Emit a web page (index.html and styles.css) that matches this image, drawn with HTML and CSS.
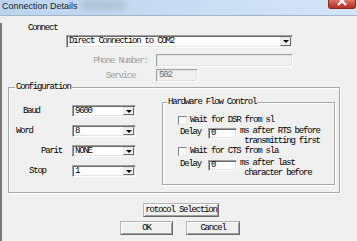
FILE: index.html
```html
<!DOCTYPE html>
<html>
<head>
<meta charset="utf-8">
<link rel="stylesheet" href="styles.css">
</head>
<body>
<div class="window">
  <div class="titlebar">
    <span class="title">Connection Details</span>
    <span class="blur"></span>
    <span class="close"><svg width="26" height="12" viewBox="0 0 26 12"><path d="M9 -3 L17 5 M17 -3 L9 5" stroke="#fff" stroke-width="2.2" fill="none"/></svg></span>
  </div>
  <div class="dialog">
    <div class="connect-label">Connect</div>
    <div class="combo combo-main"><span class="combo-text">Direct Connection to COM2</span><span class="drop"><i class="arrow"></i></span></div>
    <div class="field-row phone-row"><span class="field-label">Phone Number:</span><span class="field field-phone"></span></div>
    <div class="field-row service-row"><span class="field-label">Service</span><span class="field field-service">502</span></div>
    <div class="group config">
      <span class="legend">Configuration</span>
      <div class="config-body">
        <div class="settings">
          <span class="lbl lbl-baud">Baud</span>
          <div class="combo combo-small"><span class="combo-text">9600</span><span class="drop"><i class="arrow"></i></span></div>
          <span class="lbl lbl-word">Word</span>
          <div class="combo combo-small"><span class="combo-text">8</span><span class="drop"><i class="arrow"></i></span></div>
          <span class="lbl lbl-parit">Parit</span>
          <div class="combo combo-small"><span class="combo-text">NONE</span><span class="drop"><i class="arrow"></i></span></div>
          <span class="lbl lbl-stop">Stop</span>
          <div class="combo combo-small"><span class="combo-text">1</span><span class="drop"><i class="arrow"></i></span></div>
        </div>
        <div class="group hw">
          <span class="legend hw-legend">Hardware Flow Control</span>
          <div class="check-row first"><span class="checkbox"></span><span>Wait for DSR from sl</span></div>
          <div class="delay-row"><span class="delay-label">Delay</span><span class="delay-input">0</span><span class="delay-text">ms after RTS before
 transmitting first</span></div>
          <div class="check-row"><span class="checkbox"></span><span>Wait for CTS from sla</span></div>
          <div class="delay-row second"><span class="delay-label">Delay</span><span class="delay-input">0</span><span class="delay-text">ms after last
 character before</span></div>
        </div>
      </div>
    </div>
    <div class="btn btn-protocol">rotocol Selection</div>
    <div class="btn-row">
      <div class="btn btn-ok">OK</div>
      <div class="btn btn-cancel">Cancel</div>
    </div>
  </div>
</div>
</body>
</html>
```

FILE: styles.css
```css
* { box-sizing: border-box; }

body {
  margin: 0;
  width: 357px;
  height: 241px;
  overflow: hidden;
  background: #f0f0f0;
  font-family: "Liberation Mono", "DejaVu Sans Mono", monospace;
  font-size: 9px;
  letter-spacing: -1.2px;
  color: #000;
}

.titlebar {
  position: relative;
  height: 16px;
  border-bottom: 1px solid #a3b5c8;
  background: linear-gradient(to right, #bcd4ee, #d3e5f8);
  font-family: "Liberation Sans", Arial, sans-serif;
  letter-spacing: 0;
}

.title {
  display: block;
  padding-left: 2px;
  line-height: 13px;
  font-size: 9px;
  color: #1a1a1a;
}

.blur {
  position: absolute;
  left: 82px;
  top: 0;
  width: 44px;
  height: 10px;
  background: #8d9aa8;
  opacity: 0.35;
  filter: blur(3px);
}

.close {
  position: absolute;
  right: 1px;
  top: 0;
  width: 28px;
  height: 9px;
  border: 1px solid #8a2a20;
  border-top: none;
  border-radius: 0 0 3px 3px;
  background: linear-gradient(#d9796b, #c7453a 60%, #b53224);
  overflow: hidden;
}

.close svg { display: block; }

.dialog {
  height: 225px;
  border-left: 2px solid #7a7a7a;
}

.connect-label {
  margin: 7px 0 0 26px;
  line-height: 10px;
  height: 10px;
}

/* combo boxes */
.combo {
  display: flex;
  align-items: stretch;
  background: #fff;
  border: 1px solid;
  border-color: #a0a0a0 #fff #fff #a0a0a0;
  box-shadow: inset 1px 1px 0 #696969, inset -1px -1px 0 #e3e3e3;
}

.combo-text {
  flex: 1;
  padding-left: 2px;
  white-space: nowrap;
  overflow: hidden;
}

.combo-main {
  margin: 2px 0 0 64px;
  width: 227px;
  height: 13px;
  line-height: 11px;
}

.drop {
  width: 11px;
  margin: 1px 1px 1px 0;
  background: #f0f0f0;
  border: 1px solid;
  border-color: #e3e3e3 #696969 #696969 #e3e3e3;
  display: flex;
  align-items: center;
  justify-content: center;
}

.arrow {
  width: 0;
  height: 0;
  border-left: 3px solid transparent;
  border-right: 3px solid transparent;
  border-top: 3px solid #000;
}

/* disabled fields */
.field-row {
  display: flex;
  align-items: center;
  margin-left: 83px;
  height: 13px;
}

.phone-row { margin-top: 6px; }
.service-row { margin-top: 2px; }

.field-label {
  width: 71px;
  text-align: center;
  color: #a0a0a0;
  line-height: 10px;
}

.field {
  height: 13px;
  border: 1px solid;
  border-color: #a0a0a0 #fff #fff #a0a0a0;
  box-shadow: inset -1px -1px 0 #e3e3e3, inset 1px 1px 0 #e3e3e3;
  background: #f0f0f0;
  color: #6d6d6d;
  line-height: 11px;
  padding-left: 2px;
}

.field-phone { width: 137px; }
.field-service { width: 42px; }

/* group boxes */
.group {
  position: relative;
  border: 1px solid #a8a8a8;
  box-shadow: inset 1px 1px 0 #fff, 1px 1px 0 #fff;
}

.legend {
  position: absolute;
  top: -6px;
  left: 6px;
  padding: 0 1px;
  line-height: 10px;
  background: #f0f0f0;
  white-space: nowrap;
}

.config {
  margin: 5px 0 0 6px;
  width: 332px;
  height: 106px;
}

.config-body {
  display: flex;
  align-items: flex-start;
}

.settings {
  margin-top: 17px;
  display: grid;
  grid-template-columns: 63px 64px;
  grid-auto-rows: 12px;
  row-gap: 8px;
  align-items: center;
}

.lbl { line-height: 10px; }
.lbl-baud { padding-left: 14px; }
.lbl-word { padding-left: 7px; }
.lbl-parit { padding-left: 32px; }
.lbl-stop { padding-left: 20px; }

.combo-small {
  height: 12px;
  line-height: 10px;
}

.hw {
  margin: 14px 0 0 26px;
  width: 173px;
  height: 83px;
  padding-top: 12px;
}

.hw-legend { left: 4px; }

.check-row {
  display: flex;
  align-items: center;
  height: 10px;
  padding-left: 15px;
  line-height: 10px;
  white-space: nowrap;
}

.checkbox {
  width: 9px;
  height: 9px;
  margin-right: 3px;
  background: #fff;
  border: 1px solid;
  border-color: #808080 #e3e3e3 #e3e3e3 #808080;
}

.delay-row {
  display: flex;
  align-items: flex-start;
  margin-top: 2px;
  padding-left: 17px;
}

.delay-row.second { margin-top: 3px; }

.delay-label {
  line-height: 10px;
  width: 22px;
}

.delay-input {
  margin: 1px 0 0 6px;
  width: 29px;
  height: 11px;
  line-height: 9px;
  padding-left: 2px;
  background: #fff;
  border: 1px solid;
  border-color: #a0a0a0 #fff #fff #a0a0a0;
  box-shadow: inset 1px 1px 0 #696969, inset -1px -1px 0 #e3e3e3;
}

.delay-text {
  margin-left: 3px;
  line-height: 9.5px;
  white-space: pre;
}

/* buttons */
.btn {
  height: 14px;
  line-height: 12px;
  text-align: center;
  background: #f0f0f0;
  border: 1px solid;
  border-color: #b4b4b4 #696969 #696969 #b4b4b4;
  box-shadow: inset 1px 1px 0 #fff, inset -1px -1px 0 #a0a0a0;
  white-space: nowrap;
}

.btn-protocol {
  margin: 10px 0 0 141px;
  width: 76px;
}

.btn-row {
  display: flex;
  gap: 13px;
  margin: 4px 0 0 118px;
}

.btn-ok { width: 53px; }
.btn-cancel { width: 54px; }
```
